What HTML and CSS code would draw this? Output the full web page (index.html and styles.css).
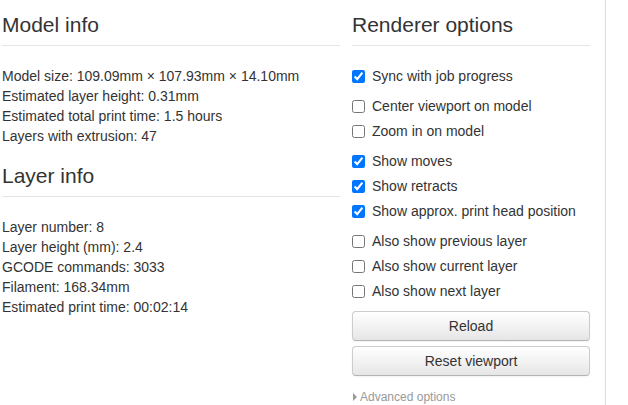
FILE: index.html
```html
<!DOCTYPE html>
<html>
	<head>
		<meta charset="utf-8" />
		<meta name="viewport" content="width=device-width, initial-scale=1">
		<title>GCode viewer</title>
		<link rel="stylesheet" href="styles.css">
	</head>
	<body>

		<div class="page">
			<div class="info">
				<div class="legend">Model info</div>
				<p>
					Model size: 109.09mm × 107.93mm × 14.10mm<br>
					Estimated layer height: 0.31mm<br>
					Estimated total print time: 1.5 hours<br>
					Layers with extrusion: 47
				</p>

				<div class="legend">Layer info</div>
				<p>
					Layer number: 8<br>
					Layer height (mm): 2.4<br>
					GCODE commands: 3033<br>
					Filament: 168.34mm<br>
					Estimated print time: 00:02:14
				</p>
			</div>

			<div class="options">
				<div class="legend">Renderer options</div>

				<div class="group">
					<label class="check"><input type="checkbox" checked> Sync with job progress</label>
				</div>

				<div class="group">
					<label class="check"><input type="checkbox"> Center viewport on model</label>
					<label class="check"><input type="checkbox"> Zoom in on model</label>
				</div>

				<div class="group">
					<label class="check"><input type="checkbox" checked> Show moves</label>
					<label class="check"><input type="checkbox" checked> Show retracts</label>
					<label class="check"><input type="checkbox" checked> Show approx. print head position</label>
				</div>

				<div class="group">
					<label class="check"><input type="checkbox"> Also show previous layer</label>
					<label class="check"><input type="checkbox"> Also show current layer</label>
					<label class="check"><input type="checkbox"> Also show next layer</label>
				</div>

				<div class="group">
					<button class="btn">Reload</button>
					<button class="btn">Reset viewport</button>
				</div>

				<div class="advanced"><span class="caret"></span>Advanced options</div>
			</div>
		</div>

	</body>
</html>
```

FILE: styles.css
```css
body {
	margin: 0;
	padding: 0;
	font-family: "Liberation Sans", Arial, sans-serif;
	font-size: 14px;
	line-height: 20px;
	color: #333;
	background-color: #fff;
}

.page {
	width: 606px;
	height: 405px;
	border-right: 1px solid #ddd;
	padding: 5px 0 0 2px;
	box-sizing: border-box;
	display: grid;
	grid-template-columns: 338px 238px;
	column-gap: 12px;
	overflow: hidden;
}

.legend {
	font-size: 21px;
	line-height: 40px;
	color: #333;
	border-bottom: 1px solid #e5e5e5;
	margin-bottom: 20px;
}

p {
	margin: 0 0 10px;
}

/* padding, so it does not collapse with the label margins */
.group {
	padding-bottom: 5px;
}

.check {
	display: flex;
	align-items: center;
	height: 20px;
	margin-bottom: 5px;
	white-space: nowrap;
}

.check input {
	width: 13px;
	height: 13px;
	margin: 0 7px 0 0;
}

/* bootstrap 2 like buttons */
.btn {
	display: block;
	width: 100%;
	height: 30px;
	padding: 4px 12px;
	margin-bottom: 5px;
	font-family: inherit;
	font-size: 14px;
	line-height: 20px;
	color: #333;
	text-align: center;
	background-color: #f5f5f5;
	background-image: linear-gradient(to bottom, #fff, #e6e6e6);
	border: 1px solid #ccc;
	border-bottom-color: #b3b3b3;
	border-radius: 4px;
	box-shadow: inset 0 1px 0 rgba(255, 255, 255, .2), 0 1px 2px rgba(0, 0, 0, .05);
}

.advanced {
	margin-top: 3px;
	font-size: 12px;
	line-height: 16px;
	color: #999;
	display: flex;
	align-items: center;
}

.caret {
	width: 0;
	height: 0;
	border-left: 4px solid #999;
	border-top: 4px solid transparent;
	border-bottom: 4px solid transparent;
	margin: 0 3px 0 1px;
}
```
